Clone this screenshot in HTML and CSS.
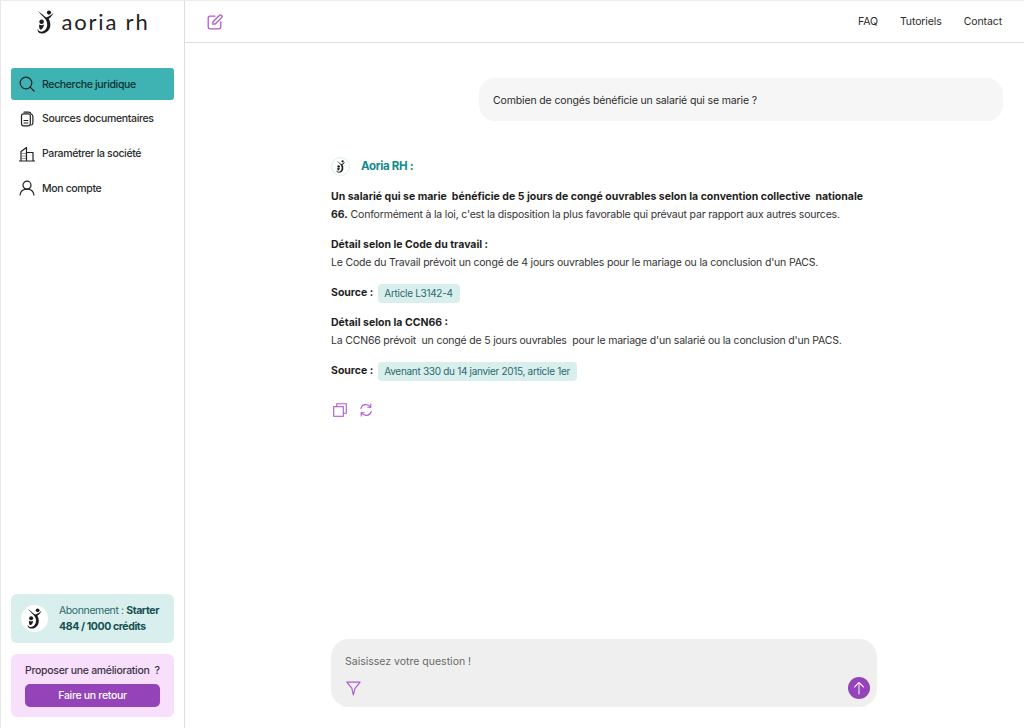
FILE: index.html
```html
<!DOCTYPE html>
<html lang="fr">
<head>
<meta charset="utf-8">
<title>Aoria RH</title>
<link rel="stylesheet" href="styles.css">
</head>
<body>
<div class="app">
  <aside class="sidebar">
    <div class="brand">
      <svg class="brand-mark" viewBox="0 0 18 24" width="18" height="24"><use href="#mark"/></svg>
      <span class="brand-name">aoria rh</span>
    </div>
    <nav class="nav">
      <a class="nav-item active">
        <svg class="nav-icon" viewBox="0 0 16 16"><circle cx="7" cy="7" r="5.8"/><path d="M11.2 11.2 15 15"/></svg>
        <span>Recherche juridique</span>
      </a>
      <a class="nav-item">
        <svg class="nav-icon" viewBox="0 0 16 16"><rect x="2.500" y="2.800" width="8.800" height="12" rx="2"/><path d="M5 1.200h4.500c1.500 0 2.400.8 2.600 1.800 1.200.4 1.800 1.200 1.800 2.500v6.500c0 1-.6 1.700-1.400 2"/><path d="M5 9.500h3.800M5 12h3.800"/></svg>
        <span>Sources documentaires</span>
      </a>
      <a class="nav-item">
        <svg class="nav-icon" viewBox="0 0 16 16"><path d="M.5 15h15M2 15V5.500L7.500 1.500V15M7.500 6.500H14V15M4 7.500v.01M6 7.500v.01M4 10v.01M6 10v.01M4 12.500v.01M6 12.500v.01"/></svg>
        <span>Paramétrer la société</span>
      </a>
      <a class="nav-item">
        <svg class="nav-icon" viewBox="0 0 16 16"><circle cx="8" cy="5.200" r="4"/><path d="M1 15c.6-3.400 3.400-5.800 7-5.800s6.400 2.400 7 5.800"/></svg>
        <span>Mon compte</span>
      </a>
    </nav>
    <div class="side-bottom">
      <div class="plan">
        <div class="plan-logo"><svg viewBox="0 0 18 24" width="16" height="21"><use href="#mark"/></svg></div>
        <div class="plan-text">
          <div>Abonnement : <b>Starter</b></div>
          <div><b>484 / 1000 crédits</b></div>
        </div>
      </div>
      <div class="feedback">
        <div class="feedback-title">Proposer une amélioration &nbsp;?</div>
        <button class="feedback-btn">Faire un retour</button>
      </div>
    </div>
  </aside>
  <main class="main">
    <header class="topbar">
      <svg class="edit-icon" viewBox="0 0 16 16"><path d="M8 2.200H3a1.800 1.800 0 0 0-1.800 1.800v9A1.800 1.800 0 0 0 3 14.800h9a1.800 1.800 0 0 0 1.800-1.800V8"/><path d="M5.800 10.200V8L12.600 1.200a1.200 1.200 0 0 1 1.700 0l.5.500a1.200 1.200 0 0 1 0 1.700L8 10.200z"/></svg>
      <nav class="links"><a>FAQ</a><a>Tutoriels</a><a>Contact</a></nav>
    </header>
    <section class="content">
      <div class="question">Combien de congés bénéficie un salarié qui se marie ?</div>
      <article class="answer">
        <div class="answer-head">
          <span class="answer-logo"><svg viewBox="0 0 18 24" width="10" height="13"><use href="#mark"/></svg></span>
          <span class="answer-name">Aoria RH :</span>
        </div>
        <p class="para"><b>Un salarié qui se marie&nbsp; bénéficie de 5 jours de congé ouvrables selon la convention collective&nbsp; nationale 66.</b> Conformément à la loi, c'est la disposition la plus favorable qui prévaut par rapport aux autres sources.</p>
        <p class="para"><b>Détail selon le Code du travail :</b><br>Le Code du Travail prévoit un congé de 4 jours ouvrables pour le mariage ou la conclusion d'un PACS.</p>
        <p class="source"><b>Source :</b><span class="tag">Article L3142-4</span></p>
        <p class="para"><b>Détail selon la CCN66 :</b><br>La CCN66 prévoit&nbsp; un congé de 5 jours ouvrables&nbsp; pour le mariage d'un salarié ou la conclusion d'un PACS.</p>
        <p class="source"><b>Source :</b><span class="tag">Avenant 330 du 14 janvier 2015, article 1er</span></p>
        <div class="actions">
          <svg class="act" viewBox="0 0 14 14"><rect x=".7" y="3.700" width="9.600" height="9.600"/><path d="M3.700 3.500V.7h9.600v9.600h-2.800"/></svg>
          <svg class="act" viewBox="0 0 14 14"><path d="M1.800 5.500C2.500 3 4.500 1.600 7 1.600c1.900 0 3.400.9 4.500 2.500M12.200 8.500C11.500 11 9.500 12.400 7 12.400c-1.900 0-3.400-.9-4.500-2.500"/><path d="M11.800 1v3.300H8.800M2.200 13V9.700h3"/></svg>
        </div>
      </article>
      <div class="composer">
        <div class="placeholder">Saisissez votre question !</div>
        <div class="composer-row">
          <svg class="filter" viewBox="0 0 14 14"><path d="M.8 1h12.400L8.500 6.800 6.800 13 5.500 6.800z"/></svg>
          <button class="send"><svg viewBox="0 0 14 14" width="14" height="14"><path d="M7 13V1.500M2.500 6 7 1.500 11.500 6"/></svg></button>
        </div>
      </div>
    </section>
  </main>
</div>
<svg class="defs" width="0" height="0">
  <symbol id="mark" viewBox="0 0 18 24">
    <circle cx="12" cy="2.600" r="2.100"/>
    <circle cx="4.600" cy="11.800" r="2.300"/>
    <path d="M.8 1C3.500 2.800 6.500 5.200 9 7.500c1.500-.6 4-1.500 7.500-4.500-1 2.500-3 4.500-4.800 5.800 2 3.500 2.200 7.500.5 10.500-1.800 3.200-5.500 4.800-8.500 4C1.500 23 .3 21 .5 19c1 2 3 3 5 2.500 3-.8 4.700-3.500 4.700-6.800 0-2.500-.9-4.500-2.400-6.200C5.500 6 3 3.200.8 1z"/>
    <path d="M2.200 14.500c1.500 1 3.500.8 4.800 0-.2 2-1.200 4.300-3.200 5.200-1.200-.2-2-2-1.600-5.200z"/>
  </symbol>
</svg>
</body>
</html>
```
FILE: styles.css
```css
* { box-sizing: border-box; }
html, body { margin: 0; height: 100%; }
body {
  font-family: "Inter", "Noto Sans", sans-serif;
  font-size: 10.500px;
  color: #1f1f1f;
  background: #fff;
}
.app {
  display: flex;
  width: 1024px;
  height: 728px;
  overflow: hidden;
  border-left: 1px solid #e8e8e8;
  border-top: 1px solid #ececec;
}
.sidebar {
  width: 184px;
  flex: none;
  border-right: 1px solid #dedede;
  display: flex;
  flex-direction: column;
  padding: 0 10px 11px;
}
.brand {
  height: 67px;
  display: flex;
  align-items: flex-start;
  justify-content: center;
  gap: 7px;
  padding: 9px 0 0 1px;
}
.brand-name {
  font-family: "Lato", sans-serif;
  font-size: 22px;
  line-height: 23px;
  letter-spacing: 1.800px;
  color: #222;
}
.nav { display: flex; flex-direction: column; gap: 2.750px; }
.nav-item {
  display: flex;
  align-items: center;
  gap: 7px;
  height: 32px;
  padding-left: 8px;
  border-radius: 3px;
  color: #2b2b2b;
  font-weight: 500;
  letter-spacing: -.35px;
}
.nav-item.active { background: #3fb3b3; color: #10302f; }
.nav-icon {
  width: 16px;
  height: 16px;
  fill: none;
  stroke: #222;
  stroke-width: 1.200;
  stroke-linecap: round;
  stroke-linejoin: round;
}
.side-bottom {
  margin-top: auto;
  display: flex;
  flex-direction: column;
  gap: 11px;
}
.plan {
  background: #d8efee;
  border-radius: 6px;
  height: 49px;
  display: flex;
  align-items: center;
  gap: 11px;
  padding-left: 10px;
}
.plan-logo {
  width: 27px;
  height: 27px;
  border-radius: 50%;
  background: #fff;
  display: flex;
  align-items: center;
  justify-content: center;
}
.plan-text { line-height: 15.500px; color: #2d6a6a; letter-spacing: -.4px; }
.plan-text b { font-weight: 700; color: #16504f; }
.feedback {
  background: #f8dffc;
  border-radius: 6px;
  height: 63px;
  padding: 10px 14px 0;
}
.feedback-title { line-height: 13px; font-weight: 500; color: #3d3347; white-space: nowrap; letter-spacing: -.3px; }
.feedback-btn {
  display: block;
  width: 100%;
  height: 23px;
  margin-top: 7px;
  border: 0;
  border-radius: 5px;
  background: #9444b8;
  color: #fff;
  font: 500 10.500px "Inter", sans-serif;
  letter-spacing: -.3px;
}
.main { flex: 1; min-width: 0; display: flex; flex-direction: column; }
.topbar {
  height: 42px;
  flex: none;
  border-bottom: 1px solid #dedede;
  display: flex;
  align-items: center;
  justify-content: space-between;
  padding: 0 22px;
}
.edit-icon {
  width: 16px;
  height: 16px;
  fill: none;
  stroke: #b05bd0;
  stroke-width: 1.300;
  stroke-linecap: round;
  stroke-linejoin: round;
}
.links { display: flex; gap: 22px; color: #2b2b2b; letter-spacing: -.1px; }
.content { flex: 1; position: relative; display: flex; flex-direction: column; }
.question {
  align-self: flex-end;
  width: 524px;
  height: 43px;
  margin: 35px 21px 0 0;
  padding: 1px 0 0 14px;
  display: flex;
  align-items: center;
  background: #f6f6f6;
  border-radius: 16px;
  color: #2b2b2b;
  letter-spacing: -.14px;
}
.answer { margin: 35px 0 0 146px; width: 540px; line-height: 18px; color: #333; letter-spacing: -.19px; }
.answer b { font-weight: 700; color: #1e1e1e; letter-spacing: 0; }
.answer-head { display: flex; align-items: center; gap: 11px; height: 20px; margin-bottom: 12px; }
.answer-logo {
  width: 19px;
  height: 19px;
  border-radius: 50%;
  border: 1px solid #d8efee;
  display: flex;
  align-items: center;
  justify-content: center;
}
.answer-name { color: #108a8a; font-weight: 700; font-size: 11.500px; letter-spacing: -.3px; }
.para { margin: 0 0 12px; }
.source { margin: 0 0 12px; display: flex; align-items: center; gap: 5px; height: 18px; }
.tag {
  background: #d8efee;
  color: #2d6a6a;
  border-radius: 4px;
  height: 19px;
  line-height: 19px;
  padding: 0 7px 0 6px;
  font-size: 10px;
  letter-spacing: -.3px;
}
.actions { display: flex; gap: 12px; margin: 23px 0 0 2px; }
.act {
  width: 14px;
  height: 14px;
  fill: none;
  stroke: #b05bd0;
  stroke-width: 1.100;
  stroke-linecap: round;
}
.composer {
  position: absolute;
  left: 146px;
  bottom: 21px;
  width: 546px;
  height: 68px;
  background: #efefef;
  border-radius: 18px;
  padding: 16px 7px 0 14px;
}
.placeholder { color: #6a6a6a; line-height: 14px; }
.composer-row {
  display: flex;
  align-items: center;
  justify-content: space-between;
  margin-top: 8px;
}
.filter {
  width: 15px;
  height: 15px;
  margin-left: 1px;
  fill: none;
  stroke: #b05bd0;
  stroke-width: 1.100;
  stroke-linejoin: round;
}
.send {
  width: 22px;
  height: 22px;
  border: 0;
  padding: 0;
  border-radius: 50%;
  background: #9444b8;
  display: flex;
  align-items: center;
  justify-content: center;
}
.send svg { fill: none; stroke: #f3e3fa; stroke-width: 1.100; stroke-linecap: round; stroke-linejoin: round; }
.defs { position: absolute; }
#mark { fill: #1c1c1c; }
```
